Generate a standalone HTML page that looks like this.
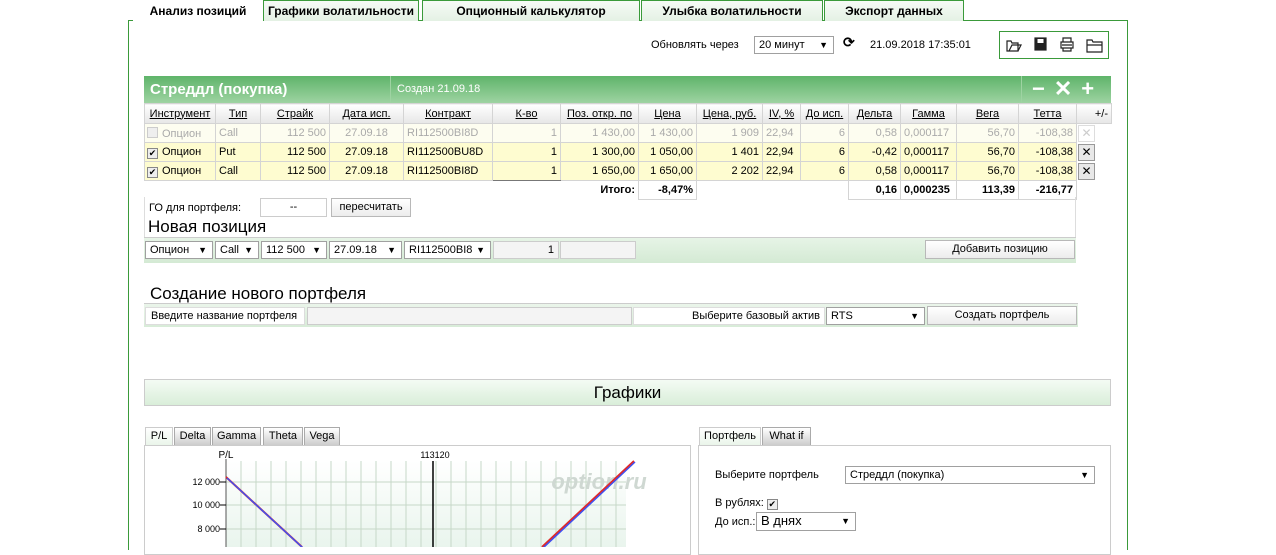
<!DOCTYPE html>
<html><head><meta charset="utf-8"><style>
*{box-sizing:border-box;margin:0;padding:0}
body{width:1276px;height:547px;overflow:hidden;background:#fff;font-family:"Liberation Sans",Arial,sans-serif;font-size:11px;color:#000;position:relative}
.a{position:absolute}
.tab{position:absolute;top:0;height:21px;background:linear-gradient(#f6fbf6,#e4f1e4);border:1px solid #3a9a3a;border-bottom:none;font-weight:bold;font-size:12px;text-align:center;line-height:21px;white-space:nowrap}
table{border-collapse:collapse;table-layout:fixed;position:absolute}
td{border:1px solid #d4d4d4;height:19px;padding:0 3px;white-space:nowrap;overflow:hidden;font-size:11px}
.h td{background:linear-gradient(#fff,#e6e6e6);text-align:center;text-decoration:underline;height:20px}
.y td{background:#fefcd0}
.g td{background:#fdfdf0;color:#aaa}
.r{text-align:right}
.sel{position:absolute;border:1px solid #a0a0a0;background:#fff;height:18px;line-height:16px;padding-left:4px;font-size:11px}
.sel:after{content:"▼";position:absolute;right:5px;font-size:9px}
.btn{position:absolute;border:1px solid #b8b8b8;background:linear-gradient(#fff,#ececec);text-align:center;height:19px;line-height:17px;font-size:11px}
.cb{display:inline-block;width:11px;height:11px;border:1px solid #888;background:#eee;vertical-align:-1px;margin-right:4px;font-size:9px;line-height:9px;text-align:center}
.xb{display:inline-block;width:17px;height:17px;border:1px solid #999;background:#e8e8e8;text-align:center;line-height:15px;font-size:12px}
.stab{position:absolute;height:18px;border:1px solid #aaa;border-bottom:none;background:linear-gradient(#fff,#ccc);font-size:11px;line-height:17px;text-align:center}
</style></head><body>
<div class="a" style="left:128px;top:20px;width:1000px;height:530px;border:1px solid #3a9a3a;border-bottom:none"></div>
<div class="tab" style="left:133px;width:130px;background:#fff;height:22px;border-color:#fff">Анализ позиций</div>
<div class="tab" style="left:263px;width:156px">Графики волатильности</div>
<div class="tab" style="left:422px;width:218px">Опционный калькулятор</div>
<div class="tab" style="left:641px;width:182px">Улыбка волатильности</div>
<div class="tab" style="left:824px;width:140px">Экспорт данных</div>

<div class="a" style="left:651px;top:39px">Обновлять через</div>
<div class="sel" style="left:754px;top:36px;width:80px">20 минут</div>
<div class="a" style="left:843px;top:34px;font-size:14px;font-weight:bold">⟳</div>
<div class="a" style="left:870px;top:39px">21.09.2018 17:35:01</div>
<div class="a" style="left:999px;top:31px;width:110px;height:28px;border:1px solid #3a9a3a"></div>
<svg class="a" style="left:1005px;top:36px" width="100" height="18">
<g fill="none" stroke="#222" stroke-width="1.2">
<path d="M2 5h4l1 2h6v8H2z M4 15l3-6h9l-3 6"/>
<rect x="30" y="2" width="11" height="12" fill="#222"/><rect x="32.5" y="3" width="6" height="4" fill="#fff" stroke="none"/>
<path d="M56 6h12v6H56z M58 6V2h8v4 M58 12v3h8v-3 M57 9h10"/>
<path d="M82 4h5l1 2h9v10H82z M82 9h15"/>
</g></svg>

<div class="a" style="left:144px;top:76px;width:967px;height:27px;background:linear-gradient(#5fb46a,#9ed3a2);color:#fff;font-weight:bold">
<span class="a" style="left:6px;top:5px;font-size:15px">Стреддл (покупка)</span>
<span class="a" style="left:246px;top:0;height:27px;border-left:1px solid #9ed3a2"></span>
<span class="a" style="left:253px;top:7px;font-size:11px;font-weight:normal">Создан 21.09.18</span>
<span class="a" style="left:877px;top:0;height:27px;border-left:1px solid #9ed3a2"></span>
<span class="a" style="left:888px;top:0px;font-size:22px;letter-spacing:9px">−✕+</span>
</div>
<table style="left:144px;top:103px;width:967px">
<colgroup><col style="width:71px"><col style="width:45px"><col style="width:69px"><col style="width:74px"><col style="width:89px"><col style="width:68px"><col style="width:78px"><col style="width:58px"><col style="width:66px"><col style="width:38px"><col style="width:48px"><col style="width:52px"><col style="width:56px"><col style="width:62px"><col style="width:58px"><col style="width:35px"></colgroup>
<tr class="h"><td>Инструмент</td><td>Тип</td><td>Страйк</td><td>Дата исп.</td><td>Контракт</td><td>К-во</td><td>Поз. откр. по</td><td>Цена</td><td>Цена, руб.</td><td>IV, %</td><td>До исп.</td><td>Дельта</td><td>Гамма</td><td>Вега</td><td>Тетта</td><td style="text-decoration:none;text-align:right">+/-</td></tr>
<tr class="g"><td style="padding:0 2px"><span class="cb" style="border-color:#ccc"></span>Опцион</td><td>Call</td><td class="r">112 500</td><td style="text-align:center">27.09.18</td><td>RI112500BI8D</td><td class="r">1</td><td class="r">1 430,00</td><td class="r">1 430,00</td><td class="r">1 909</td><td>22,94</td><td class="r">6</td><td class="r">0,58</td><td>0,000117</td><td class="r">56,70</td><td class="r">-108,38</td><td style="background:#fff;border:none;padding:0 1px;color:#ccc"><span class="xb" style="background:#fff;border-color:#ddd">✕</span></td></tr>
<tr class="y"><td style="padding:0 2px"><span class="cb">✔</span>Опцион</td><td>Put</td><td class="r">112 500</td><td style="text-align:center">27.09.18</td><td>RI112500BU8D</td><td class="r" style="border-left:1px solid #777">1</td><td class="r">1 300,00</td><td class="r">1 050,00</td><td class="r">1 401</td><td>22,94</td><td class="r">6</td><td class="r">-0,42</td><td>0,000117</td><td class="r">56,70</td><td class="r">-108,38</td><td style="background:#fff;border:none;padding:0 1px"><span class="xb">✕</span></td></tr>
<tr class="y"><td style="padding:0 2px"><span class="cb">✔</span>Опцион</td><td>Call</td><td class="r">112 500</td><td style="text-align:center">27.09.18</td><td>RI112500BI8D</td><td class="r" style="border-left:1px solid #777;border-bottom:1px solid #777">1</td><td class="r">1 650,00</td><td class="r">1 650,00</td><td class="r">2 202</td><td>22,94</td><td class="r">6</td><td class="r">0,58</td><td>0,000117</td><td class="r">56,70</td><td class="r">-108,38</td><td style="background:#fff;border:none;padding:0 1px"><span class="xb">✕</span></td></tr>
<tr style="font-weight:bold"><td colspan="7" class="r" style="border:none;font-weight:bold">Итого:</td><td class="r" style="font-weight:bold">-8,47%</td><td colspan="3" style="border:none"></td><td class="r" style="font-weight:bold">0,16</td><td style="font-weight:bold">0,000235</td><td class="r" style="font-weight:bold">113,39</td><td class="r" style="font-weight:bold">-216,77</td><td style="border:none"></td></tr>
</table>
<div class="a" style="left:144px;top:197px;width:932px;height:66px;border-left:1px solid #ddd;border-right:1px solid #ddd"></div>
<div class="a" style="left:149px;top:202px">ГО для портфеля:</div>
<div class="a" style="left:260px;top:198px;width:67px;height:19px;border:1px solid #ccc;text-align:center;line-height:17px">--</div>
<div class="btn" style="left:331px;top:198px;width:80px">пересчитать</div>
<div class="a" style="left:148px;top:217px;font-size:17px">Новая позиция</div>
<div class="a" style="left:144px;top:237px;width:932px;height:26px;background:linear-gradient(#e6f4e6,#d4ead4);border-top:1px solid #ccc"></div>
<div class="sel" style="left:145px;top:241px;width:68px">Опцион</div>
<div class="sel" style="left:215px;top:241px;width:44px">Call</div>
<div class="sel" style="left:261px;top:241px;width:66px">112 500</div>
<div class="sel" style="left:329px;top:241px;width:73px">27.09.18</div>
<div class="sel" style="left:404px;top:241px;width:87px">RI112500BI8</div>
<div class="a" style="left:493px;top:241px;width:66px;height:18px;background:#f4f4f4;border:1px solid #ccc;text-align:right;padding-right:4px;line-height:16px">1</div>
<div class="a" style="left:560px;top:241px;width:76px;height:18px;background:#f4f4f4;border:1px solid #ccc"></div>
<div class="btn" style="left:925px;top:240px;width:150px">Добавить позицию</div>

<div class="a" style="left:150px;top:284px;font-size:17px">Создание нового портфеля</div>
<div class="a" style="left:144px;top:303px;width:934px;height:24px;background:linear-gradient(#eaf5ea,#d8ecd8);border-top:1px solid #ccc"></div>
<div class="a" style="left:145px;top:307px;width:160px;height:18px;background:#fff;border:1px solid #ddd;padding-left:5px;line-height:16px">Введите название портфеля</div>
<div class="a" style="left:307px;top:307px;width:325px;height:18px;background:#f4f4f4;border:1px solid #ccc"></div>
<div class="a" style="left:633px;top:307px;width:192px;height:18px;background:#fff;border:1px solid #ddd;text-align:right;padding-right:4px;line-height:16px">Выберите базовый актив</div>
<div class="sel" style="left:826px;top:307px;width:99px">RTS</div>
<div class="btn" style="left:927px;top:306px;width:150px">Создать портфель</div>

<div class="a" style="left:144px;top:379px;width:967px;height:27px;background:linear-gradient(#f4fbf4,#d9eed9);border:1px solid #ccc;text-align:center;font-size:17px;line-height:25px">Графики</div>

<div class="stab" style="left:145px;top:427px;width:28px;background:linear-gradient(#fff,#eaf5ea);border-color:#ccc">P/L</div>
<div class="stab" style="left:174px;top:427px;width:37px">Delta</div>
<div class="stab" style="left:212px;top:427px;width:49px">Gamma</div>
<div class="stab" style="left:263px;top:427px;width:40px">Theta</div>
<div class="stab" style="left:304px;top:427px;width:36px">Vega</div>
<div class="a" style="left:144px;top:445px;width:547px;height:110px;border:1px solid #ccc"></div>
<svg class="a" style="left:144px;top:445px" width="547" height="102">
<defs><linearGradient id="bg" x1="0" y1="0" x2="0" y2="1"><stop offset="0" stop-color="#fff"/><stop offset="1" stop-color="#e8f4ec"/></linearGradient></defs>
<rect x="82" y="16" width="400" height="90" fill="url(#bg)"/>
<g stroke="#c6d8c8" stroke-width="1">
<path d="M97 16V102M112 16V102M127 16V102M142 16V102M157 16V102M172 16V102M187 16V102M202 16V102M217 16V102M232 16V102M247 16V102M262 16V102M277 16V102M292 16V102M307 16V102M322 16V102M337 16V102M352 16V102M367 16V102M382 16V102M397 16V102M412 16V102M427 16V102M442 16V102M457 16V102M472 16V102"/>
<path d="M82 37H482M82 60H482M82 84H482"/>
</g>
<text x="455" y="44" font-size="22" font-weight="bold" font-style="italic" fill="#cfd8d2" text-anchor="middle" font-family="Liberation Sans">option.ru</text>
<line x1="82" y1="14" x2="82" y2="102" stroke="#555"/>
<path d="M76 37H82M76 60H82M76 84H82" stroke="#000"/>
<line x1="289" y1="16" x2="289" y2="102" stroke="#000" stroke-width="1.5"/>
<text x="76" y="40" font-size="9" text-anchor="end">12 000</text>
<text x="76" y="63" font-size="9" text-anchor="end">10 000</text>
<text x="76" y="87" font-size="9" text-anchor="end">8 000</text>
<text x="82" y="13" font-size="10" text-anchor="middle">P/L</text>
<text x="291" y="13" font-size="9" text-anchor="middle">113120</text>
<path d="M82 32L158 102M398 102L490 16" stroke="#e02a2a" stroke-width="2"/>
<path d="M83 33L159 103M399 103L491 17" stroke="#4050f0" stroke-width="1.5"/>
</svg>

<div class="stab" style="left:699px;top:427px;width:62px;background:linear-gradient(#fff,#eaf5ea);border-color:#ccc">Портфель</div>
<div class="stab" style="left:762px;top:427px;width:49px">What if</div>
<div class="a" style="left:698px;top:445px;width:413px;height:110px;border:1px solid #ccc"></div>
<div class="a" style="left:715px;top:469px">Выберите портфель</div>
<div class="sel" style="left:845px;top:466px;width:250px">Стреддл (покупка)</div>
<div class="a" style="left:715px;top:497px">В рублях: <span class="cb">✔</span></div>
<div class="a" style="left:715px;top:516px">До исп.:</div>
<div class="sel" style="left:756px;top:512px;width:100px;height:19px;font-size:13px">В днях</div>
</body></html>
